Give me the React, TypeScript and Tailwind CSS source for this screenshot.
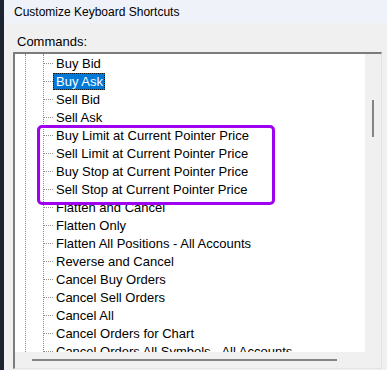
import React from 'react';

const commands = [
  "Buy Bid",
  "Buy Ask",
  "Sell Bid",
  "Sell Ask",
  "Buy Limit at Current Pointer Price",
  "Sell Limit at Current Pointer Price",
  "Buy Stop at Current Pointer Price",
  "Sell Stop at Current Pointer Price",
  "Flatten and Cancel",
  "Flatten Only",
  "Flatten All Positions - All Accounts",
  "Reverse and Cancel",
  "Cancel Buy Orders",
  "Cancel Sell Orders",
  "Cancel All",
  "Cancel Orders for Chart",
  "Cancel Orders All Symbols - All Accounts",
];

const App: React.FC = () => {
  return (
    <div
      className="w-[387px] h-[370px] flex overflow-hidden relative text-black"
      style={{ fontFamily: '"Liberation Sans", Arial, sans-serif' }}
    >
      {/* dark window edge */}
      <div className="w-[4px] h-full shrink-0 bg-[#1c2432]" />

      <div className="flex-1 min-h-0 flex flex-col bg-[#f0f0f0]">
        {/* Title bar */}
        <div className="h-[23px] shrink-0 bg-[#eff2f9] flex items-center pl-[10px] text-[12px] leading-none">
          Customize Keyboard Shortcuts
        </div>

        {/* Body */}
        <div className="flex-1 min-h-0 flex flex-col pl-[9px] pr-[5px]">
          <div className="h-[29px] shrink-0 flex items-center pl-[4px] pt-[8px] text-[13px] leading-none">
            Commands:
          </div>

          {/* List box */}
          <div className="flex-1 min-h-0 border-t-2 border-l-2 border-t-[#7c7c7c] border-l-[#7c7c7c] border-r border-b border-r-[#e3e3e3] border-b-[#e3e3e3] grid grid-cols-[1fr_16px] grid-rows-[1fr_16px] overflow-hidden mb-[1px]">
            {/* Tree */}
            <div className="bg-white overflow-hidden min-h-0 flex">
              <div className="w-[10px] shrink-0" />
              <div className="w-[18px] shrink-0 border-l border-dotted border-[#8c8c8c]" />
              <div className="flex flex-col shrink-0 border-l border-dotted border-[#8c8c8c] h-[400px]">
                {commands.map((c, i) => (
                  <div key={i} className="h-[18px] shrink-0 flex items-center text-[13px] leading-none whitespace-nowrap">
                    <span className="w-[9px] border-t border-dotted border-[#8c8c8c]" />
                    {i === 1 ? (
                      <span className="h-[17px] flex items-center pl-[2px] pr-[2px] bg-[#0078d7] text-white outline outline-1 outline-dotted outline-[#1a1a1a] -outline-offset-1">
                        <span className="pl-[1px]">{c}</span>
                      </span>
                    ) : (
                      <span className="pl-[3px]">{c}</span>
                    )}
                  </div>
                ))}
              </div>
            </div>

            {/* Vertical scrollbar */}
            <div className="bg-[#f0f0f0] flex justify-center pt-[46px]">
              <div className="w-[2px] h-[37px] bg-[#858585] ml-[-1px]" />
            </div>

            {/* Horizontal scrollbar */}
            <div className="bg-[#f0f0f0] flex items-center pl-[17px]">
              <div className="h-[2px] w-[305px] bg-[#858585]" />
            </div>
            <div className="bg-[#f0f0f0]" />
          </div>
        </div>
      </div>

      {/* Highlight annotation */}
      <div className="absolute left-[37px] top-[125px] w-[238px] h-[80px] border-[3px] border-[#a000f0] rounded-[5px] pointer-events-none" />
    </div>
  );
};

export default App;
